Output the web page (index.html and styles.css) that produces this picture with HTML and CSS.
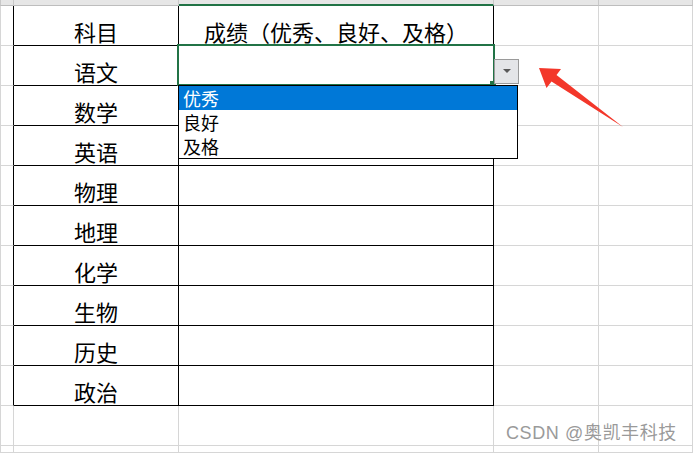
FILE: index.html
```html
<!DOCTYPE html>
<html lang="zh-CN">
<head>
<meta charset="utf-8">
<title>Excel 下拉列表</title>
<link rel="stylesheet" href="styles.css">
</head>
<body>
<div class="sheet">
  <div class="hd stub"></div>
  <div class="hd"><span>A</span></div>
  <div class="hd hd-sel"><span>B</span></div>
  <div class="hd"><span>C</span></div>
  <div class="hd"><span>D</span></div>

  <div class="c stub tl"></div><div class="c tb">科目</div><div class="c tb">成绩（优秀、良好、及格）</div><div class="c"></div><div class="c"></div>
  <div class="c stub tl"></div><div class="c tb">语文</div><div class="c tb"></div><div class="c"></div><div class="c"></div>
  <div class="c stub tl"></div><div class="c tb">数学</div><div class="c tb"></div><div class="c"></div><div class="c"></div>
  <div class="c stub tl"></div><div class="c tb">英语</div><div class="c tb"></div><div class="c"></div><div class="c"></div>
  <div class="c stub tl"></div><div class="c tb">物理</div><div class="c tb"></div><div class="c"></div><div class="c"></div>
  <div class="c stub tl"></div><div class="c tb">地理</div><div class="c tb"></div><div class="c"></div><div class="c"></div>
  <div class="c stub tl"></div><div class="c tb">化学</div><div class="c tb"></div><div class="c"></div><div class="c"></div>
  <div class="c stub tl"></div><div class="c tb">生物</div><div class="c tb"></div><div class="c"></div><div class="c"></div>
  <div class="c stub tl"></div><div class="c tb">历史</div><div class="c tb"></div><div class="c"></div><div class="c"></div>
  <div class="c stub tl"></div><div class="c tb">政治</div><div class="c tb"></div><div class="c"></div><div class="c"></div>
  <div class="c stub"></div><div class="c"></div><div class="c"></div><div class="c"></div><div class="c"></div>
  <div class="c stub"></div><div class="c"></div><div class="c"></div><div class="c"></div><div class="c"></div>

  <div class="sel"></div>
  <div class="handle"></div>
  <div class="dd-btn"><i class="tri"></i></div>
  <ul class="dd-list">
    <li class="on">优秀</li>
    <li>良好</li>
    <li>及格</li>
  </ul>
  <svg class="arrow" width="693" height="453" viewBox="0 0 693 453">
    <polygon points="539,68 561,69 556.5,75 623,127 551.5,81.5 546.5,88" fill="#f3372a"/>
  </svg>
  <div class="wm">CSDN @奥凯丰科技</div>
</div>
</body>
</html>
```

FILE: styles.css
```css
html, body {
  margin: 0;
  padding: 0;
  background: #fff;
  overflow: hidden;
}

.sheet {
  position: relative;
  width: 693px;
  height: 453px;
  display: grid;
  grid-template-columns: 14px 165px 315px 105px 1fr;
  grid-template-rows: 6px repeat(11, 40px) 1fr;
  font-family: "Noto Sans CJK SC", "Noto Sans", sans-serif;
  overflow: hidden;
}

.hd {
  background: #e6e6e6;
  border-right: 1px solid #c8c8c8;
  border-bottom: 1px solid #bdbdbd;
  box-sizing: border-box;
  display: flex;
  justify-content: center;
  align-items: flex-start;
  overflow: hidden;
}

.hd span {
  font: 14px/14px "Liberation Sans", sans-serif;
  color: #333;
  margin-top: -12px;
}

.hd-sel {
  border-bottom: 2px solid #217346;
}

.hd-sel span {
  color: #217346;
}

.hd.stub {
  border-left: 1px solid #c8c8c8;
}

.c {
  box-sizing: border-box;
  border-right: 1px solid #d6d6d6;
  border-bottom: 1px solid #d6d6d6;
  display: flex;
  align-items: flex-end;
  justify-content: center;
  font-size: 22px;
  line-height: 22px;
  padding-bottom: 3px;
  color: #000;
  white-space: nowrap;
}

.c.stub {
  border-left: 1px solid #d6d6d6;
}

.c.tl {
  border-right-color: #000;
}

.c.tb {
  border-right-color: #000;
  border-bottom-color: #000;
}

.sel {
  position: absolute;
  left: 177px;
  top: 44px;
  width: 318px;
  height: 42px;
  box-sizing: border-box;
  border: 2px solid #217346;
}

.handle {
  position: absolute;
  left: 490px;
  top: 81px;
  width: 6px;
  height: 5px;
  background: #217346;
}

.dd-btn {
  position: absolute;
  left: 494px;
  top: 59px;
  width: 25px;
  height: 25px;
  box-sizing: border-box;
  border: 1px solid #9a9a9a;
  background: #e4e5e8;
  display: flex;
  align-items: center;
  justify-content: center;
}

.tri {
  width: 0;
  height: 0;
  border-left: 4px solid transparent;
  border-right: 4px solid transparent;
  border-top: 4px solid #595959;
  margin-top: -1px;
}

.dd-list {
  position: absolute;
  left: 178px;
  top: 85px;
  width: 340px;
  height: 74px;
  box-sizing: border-box;
  margin: 0;
  padding: 0;
  list-style: none;
  background: #fff;
  border: 1px solid #000;
}

.dd-list li {
  height: 24px;
  line-height: 24px;
  font-size: 18px;
  padding-left: 4px;
  color: #000;
}

.dd-list li.on {
  background: #0078d7;
  color: #fff;
}

.arrow {
  position: absolute;
  left: 0;
  top: 0;
}

.wm {
  position: absolute;
  left: 506px;
  top: 421px;
  font-family: "Liberation Sans", "Noto Sans CJK SC", sans-serif;
  font-size: 18px;
  letter-spacing: 0.6px;
  line-height: 24px;
  color: #9a9a9a;
  white-space: nowrap;
}
```
